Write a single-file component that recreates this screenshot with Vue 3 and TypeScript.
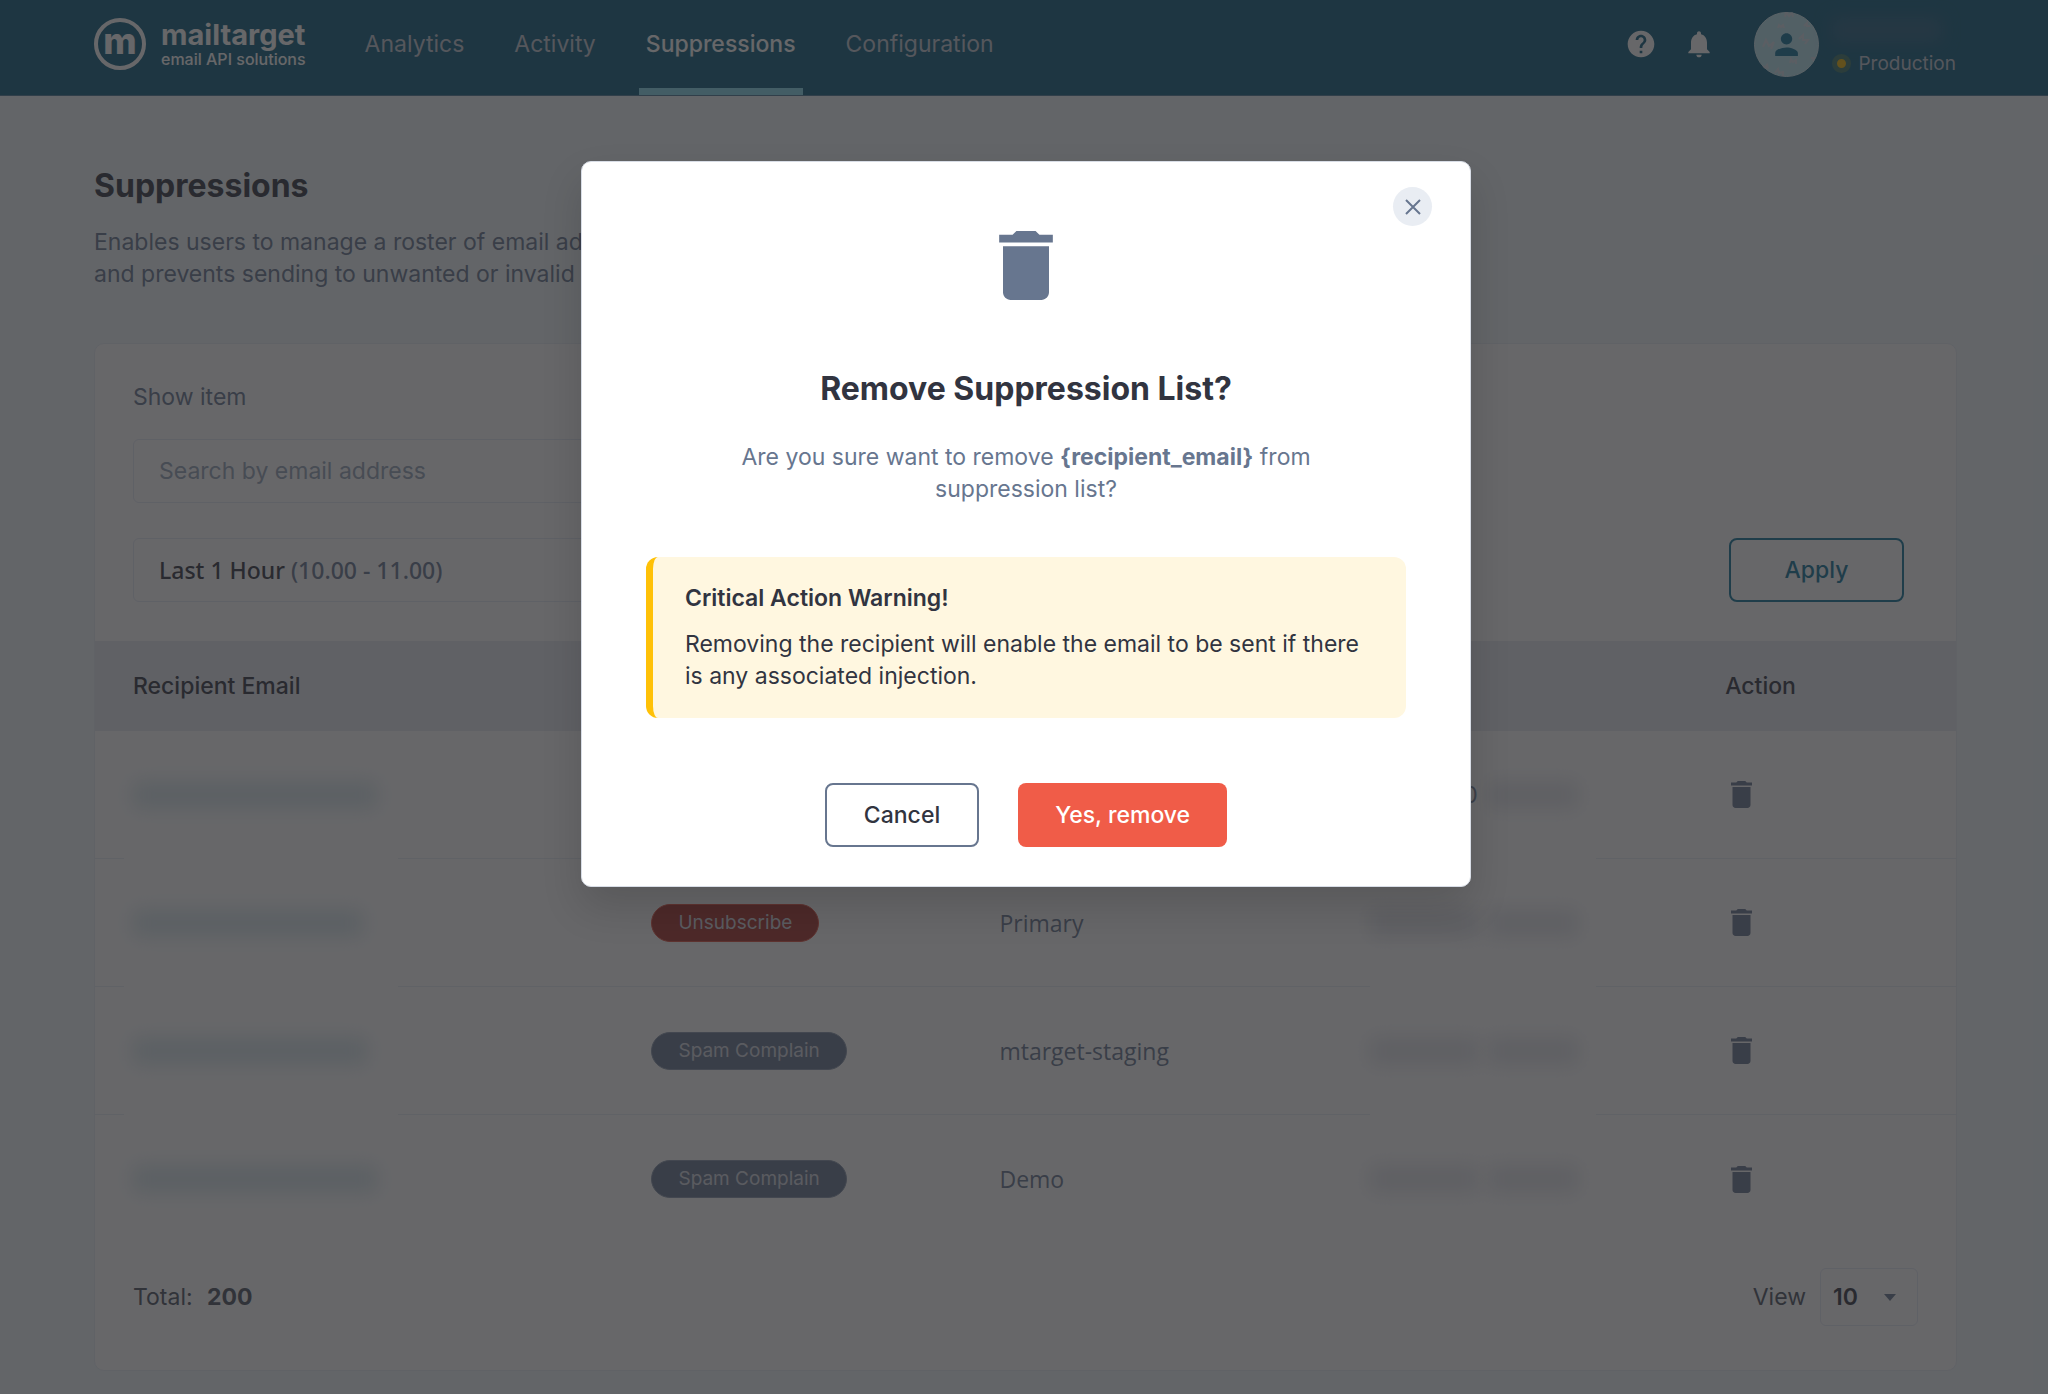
<script setup lang="ts">
import { ref } from 'vue'

interface NavItem {
  label: string
  active: boolean
}
interface Row {
  emailWidth: number
  status: string
  kind: 'danger' | 'muted'
  account: string
  timePrefix: string
}

const nav: NavItem[] = [
  { label: 'Analytics', active: false },
  { label: 'Activity', active: false },
  { label: 'Suppressions', active: true },
  { label: 'Configuration', active: false },
]

const rows: Row[] = [
  { emailWidth: 244, status: 'Spam Complain', kind: 'muted', account: 'Primary', timePrefix: '10:20:00' },
  { emailWidth: 230, status: 'Unsubscribe', kind: 'danger', account: 'Primary', timePrefix: '' },
  { emailWidth: 234, status: 'Spam Complain', kind: 'muted', account: 'mtarget-staging', timePrefix: '' },
  { emailWidth: 244, status: 'Spam Complain', kind: 'muted', account: 'Demo', timePrefix: '' },
]

const search = ref('')
const pageSize = ref('10')
const trash = 'M6 19c0 1.1.9 2 2 2h8c1.1 0 2-.9 2-2V7H6v12zM19 4h-3.5l-1-1h-5l-1 1H5v2h14V4z'
</script>

<template>
  <div class="app">
    <header class="topbar">
      <a class="brand" href="#">
        <span class="brand-mark">m</span>
        <span class="brand-text">
          <span class="brand-name">mailtarget</span>
          <span class="brand-sub">email API solutions</span>
        </span>
      </a>
      <nav class="nav">
        <a v-for="item in nav" :key="item.label" href="#" :class="['nav-link', { active: item.active }]">{{ item.label }}</a>
      </nav>
      <div class="tools">
        <button class="icon-btn" type="button" aria-label="Help">
          <svg viewBox="0 0 24 24" width="32" height="32"><path d="M12 2C6.48 2 2 6.48 2 12s4.480 10 10 10 10-4.480 10-10S17.520 2 12 2zm1 17h-2v-2h2v2zm2.070-7.750l-.9.920C13.450 12.900 13 13.500 13 15h-2v-.5c0-1.100.450-2.100 1.170-2.830l1.240-1.260c.370-.360.590-.860.590-1.410 0-1.100-.9-2-2-2s-2 .9-2 2H8c0-2.210 1.790-4 4-4s4 1.790 4 4c0 .880-.360 1.680-.930 2.250z" /></svg>
        </button>
        <button class="icon-btn" type="button" aria-label="Notifications">
          <svg viewBox="0 0 24 24" width="32" height="32"><path d="M12 22c1.100 0 2-.9 2-2h-4c0 1.100.890 2 2 2zm6-6v-5c0-3.070-1.640-5.640-4.500-6.320V4c0-.830-.670-1.500-1.500-1.500s-1.500.670-1.500 1.500v.680C7.630 5.360 6 7.920 6 11v5l-2 2v1h16v-1l-2-2z" /></svg>
        </button>
        <div class="account">
          <svg class="avatar" viewBox="0 0 65 65" width="65" height="65">
            <clipPath id="avatar-clip"><circle cx="32.500" cy="32.500" r="32.500" /></clipPath>
            <circle class="avatar-bg" cx="32.500" cy="32.500" r="32" />
            <g class="avatar-pattern" clip-path="url(#avatar-clip)">
              <path d="M9 35l3-7 3 6 5-4-3 7" /><path d="M31 5l1-5 3 4 3-4 1 5" />
              <path d="M45 27l4-4 0 5 5 0-3 4" /><path d="M24 16l1-3 2 2 2-2 1 3" />
              <path d="M50 14l3-3 0 3 3 0" /><path d="M36 51l1-4 2 3 3-2 0 4" />
              <path d="M21 61l3-4 1 4 4-1 0 4" /><path d="M9 54l2 2 2-3 1 4" /><path d="M57 46l3 0-1 3" />
            </g>
            <path class="avatar-person" transform="translate(15.500 15.500) scale(1.420)" d="M12 12c2.210 0 4-1.790 4-4s-1.790-4-4-4-4 1.790-4 4 1.790 4 4 4zm0 2c-2.670 0-8 1.340-8 4v2h16v-2c0-2.660-5.330-4-8-4z" />
          </svg>
          <div class="account-text">
            <span class="account-name"></span>
            <span class="env"><span class="env-dot"></span>Production</span>
          </div>
        </div>
      </div>
    </header>

    <main class="page">
      <h1>Suppressions</h1>
      <p class="lead">
        Enables users to manage a roster of email addresses,<br />
        and prevents sending to unwanted or invalid addresses.
      </p>

      <section class="card">
        <form class="filters" @submit.prevent>
          <label class="filter-label" for="search">Show item</label>
          <input id="search" v-model="search" class="field" type="text" placeholder="Search by email address" />
          <div class="filter-row">
            <button class="field range" type="button">Last 1 Hour <span>(10.00 - 11.00)</span></button>
            <button class="btn btn-apply" type="submit">Apply</button>
          </div>
        </form>

        <table>
          <colgroup>
            <col class="c-email" /><col class="c-status" /><col class="c-account" /><col class="c-time" /><col />
          </colgroup>
          <thead>
            <tr>
              <th>Recipient Email</th>
              <th>Status</th>
              <th>Sub Account</th>
              <th>Time</th>
              <th>Action</th>
            </tr>
          </thead>
          <tbody>
            <tr v-for="(row, i) in rows" :key="i">
              <td class="email"><span class="smudge" :style="{ width: row.emailWidth + 'px' }"></span></td>
              <td><span :class="['badge', row.kind]">{{ row.status }}</span></td>
              <td class="account-cell">{{ row.account }}</td>
              <td class="time">
                <div class="time-inner">
                  <span v-if="row.timePrefix" class="time-prefix">{{ row.timePrefix }}</span>
                  <span v-else class="smudge wide"></span>
                  <span class="smudge short"></span>
                </div>
              </td>
              <td class="action">
                <button class="icon-btn" type="button" aria-label="Remove">
                  <svg viewBox="5 3 14 18" width="21" height="27"><path :d="trash" /></svg>
                </button>
              </td>
            </tr>
          </tbody>
        </table>

        <footer class="card-foot">
          <span class="total">Total: <strong>200</strong></span>
          <div class="view">
            <label for="page-size">View</label>
            <div class="select">
              <select id="page-size" v-model="pageSize">
                <option>10</option>
                <option>25</option>
                <option>50</option>
              </select>
              <span class="caret"></span>
            </div>
          </div>
        </footer>
      </section>
    </main>

    <div class="overlay">
      <div class="modal" role="dialog" aria-modal="true" aria-labelledby="modal-title">
        <button class="close" type="button" aria-label="Close">
          <svg viewBox="0 0 18 18" width="18" height="18"><path d="M2 2l14 14M16 2L2 16" /></svg>
        </button>
        <svg class="modal-icon" viewBox="5 3 14 18" width="54" height="69"><path :d="trash" /></svg>
        <h2 id="modal-title">Remove Suppression List?</h2>
        <p class="question">Are you sure want to remove <strong>{recipient_email}</strong> from suppression list?</p>
        <div class="alert">
          <strong>Critical Action Warning!</strong>
          <p>Removing the recipient will enable the email to be sent if there is any associated injection.</p>
        </div>
        <div class="actions">
          <button class="btn btn-cancel" type="button">Cancel</button>
          <button class="btn btn-danger" type="button">Yes, remove</button>
        </div>
      </div>
    </div>
  </div>
</template>

<style>
body {
  background: #f0f8fb;
}
</style>

<style scoped>
* {
  box-sizing: border-box;
}
.app {
  position: relative;
  min-height: 100vh;
  background: #f0f8fb;
  color: #313440;
  font-family: Inter, "Noto Sans", sans-serif;
  font-size: 23px;
  line-height: 32px;
}
a {
  color: inherit;
  text-decoration: none;
}
button,
input,
select {
  font: inherit;
  color: inherit;
}
svg {
  display: block;
}

.topbar {
  display: flex;
  align-items: stretch;
  height: 96px;
  padding: 0 92px 0 94px;
  background: #0c5c7c;
  border-bottom: 1px solid #4a7898;
  color: #ffffff;
}
.brand {
  display: flex;
  align-items: center;
  gap: 15px;
  height: 88px;
  margin-right: 52px;
}
.brand-mark {
  display: flex;
  justify-content: center;
  width: 52px;
  height: 52px;
  border: 4px solid #ffffff;
  border-radius: 50%;
  font-size: 36px;
  font-weight: 800;
  line-height: 38px;
}
.brand-text {
  display: flex;
  flex-direction: column;
}
.brand-name {
  font-size: 29px;
  font-weight: 700;
  line-height: 30px;
}
.brand-sub {
  font-size: 16px;
  font-weight: 500;
  line-height: 18px;
}
.nav {
  display: flex;
  gap: 36px;
}
.nav-link {
  padding: 28px 7px 0;
  color: #c2c8d4;
}
.nav-link.active {
  color: #ffffff;
  font-weight: 500;
  border-bottom: 7px solid #88dcf0;
}
.tools {
  display: flex;
  align-items: center;
  height: 88px;
  margin-left: auto;
}
.icon-btn {
  display: block;
  padding: 0;
  border: 0;
  background: none;
}
.icon-btn svg {
  fill: currentColor;
}
.tools .icon-btn {
  margin-right: 26px;
}
.account {
  display: flex;
  gap: 13px;
  margin-left: 13px;
}
.avatar-bg {
  fill: #b8e6f2;
  stroke: #d4eef4;
}
.avatar-pattern {
  fill: none;
  stroke: #d8e2ea;
  stroke-width: 2;
}
.avatar-person {
  fill: #0f7398;
}
.account-text {
  display: flex;
  flex-direction: column;
  justify-content: space-between;
}
.account-name {
  width: 110px;
  height: 24px;
  margin-top: 6px;
  background: #266082;
  filter: blur(8px);
}
.env {
  display: flex;
  align-items: center;
  gap: 7px;
  color: #c2c8d4;
  font-size: 19px;
  line-height: 26px;
}
.env-dot {
  width: 19px;
  height: 19px;
  border: 5px solid #3a7464;
  border-radius: 50%;
  background: #f0b400;
}

.page {
  padding: 64px 91px 25px 94px;
}
h1 {
  margin: 0;
  font-size: 32px;
  font-weight: 700;
  line-height: 52px;
}
.lead {
  margin: 14px 0 53px;
  color: #67768f;
}
.card {
  border: 1px solid #e8edf6;
  border-radius: 10px;
  background: #ffffff;
  overflow: hidden;
}
.filters {
  display: flex;
  flex-direction: column;
  padding: 37px 52px 39px 38px;
}
.filter-label {
  color: #67768f;
}
.field {
  width: 720px;
  height: 64px;
  padding: 0 25px;
  border: 1px solid #e4e9f4;
  border-radius: 6px;
  background: none;
  text-align: left;
}
#search {
  margin: 26px 0 35px;
}
#search::placeholder {
  color: #94a3b8;
  opacity: 1;
}
.range {
  font-family: "Noto Sans", sans-serif;
  font-weight: 500;
}
.range span {
  color: #67768f;
}
.filter-row {
  display: flex;
  justify-content: space-between;
}
.btn {
  height: 64px;
  border-radius: 8px;
  font-weight: 500;
}
.btn-apply {
  width: 175px;
  border: 2px solid #0f7398;
  background: none;
  color: #0f7398;
}

table {
  width: 100%;
  border-collapse: separate;
  border-spacing: 0;
  table-layout: fixed;
}
.c-email {
  width: 29.9%;
}
.c-status {
  width: 18.7%;
}
.c-account {
  width: 19.9%;
}
.c-time {
  width: 19.1%;
}
th {
  height: 90px;
  padding: 0;
  background: #e6eaf2;
  font-weight: 500;
  text-align: left;
}
td {
  height: 128px;
  padding: 0;
  border-bottom: 1px solid #e8edf6;
}
tbody tr:last-child td {
  border-bottom: 0;
}
th:first-child,
td:first-child {
  padding-left: 38px;
}
.smudge {
  display: block;
  height: 26px;
  background: #d6e6ec;
  filter: blur(10px);
}
.email,
.time {
  position: relative;
}
.email::after,
.time::after {
  content: "";
  position: absolute;
  bottom: -1px;
  left: 29px;
  width: 274px;
  height: 1px;
  background: #ffffff;
}
.time::after {
  left: 0;
  width: 226px;
}
.badge {
  display: inline-block;
  padding: 0 26px;
  border: 1px solid #8594aa;
  border-radius: 20px;
  background: #67768f;
  color: #d4d8e0;
  font-size: 19px;
  line-height: 36px;
}
.badge.danger {
  border-color: #e05040;
  background: #a83028;
}
.account-cell {
  color: #67768f;
  font-family: "Open Sans", sans-serif;
}
.time-inner {
  display: flex;
  align-items: center;
  gap: 10px;
}
.time-prefix {
  width: 108px;
  color: #67768f;
  text-align: right;
}
.time .smudge {
  background: #e2e4ea;
}
.wide {
  width: 108px;
}
.short {
  width: 90px;
}
.action {
  color: #67768f;
}
.action .icon-btn {
  margin-left: 6px;
}

.card-foot {
  display: flex;
  align-items: center;
  justify-content: space-between;
  height: 127px;
  padding: 0 38px 19px;
}
.total strong {
  margin-left: 8px;
}
.total,
.view {
  color: #4a5160;
}
.view {
  display: flex;
  align-items: center;
  gap: 14px;
}
.select {
  position: relative;
}
.select select {
  width: 98px;
  height: 58px;
  padding: 0 12px;
  border: 1px solid #e4e9f4;
  border-radius: 6px;
  background: none;
  color: #313440;
  font-weight: 600;
  appearance: none;
}
.caret {
  position: absolute;
  top: 26px;
  right: 22px;
  border: 6px solid transparent;
  border-top: 7px solid #67768f;
  border-bottom: 0;
  pointer-events: none;
}

.overlay {
  position: absolute;
  inset: 0;
  display: flex;
  align-items: flex-start;
  justify-content: center;
  padding: 161px 0 0 4px;
  background: rgba(38, 39, 41, 0.7);
}
.modal {
  position: relative;
  display: flex;
  flex-direction: column;
  align-items: center;
  width: 890px;
  padding: 69px 64px 39px;
  border: 1px solid #d8dde6;
  border-radius: 10px;
  background: #ffffff;
  box-shadow: 0 20px 40px rgba(0, 0, 0, 0.14);
}
.close {
  position: absolute;
  top: 25px;
  right: 38px;
  display: grid;
  place-items: center;
  width: 39px;
  height: 39px;
  padding: 0;
  border: 0;
  border-radius: 50%;
  background: #e9edf3;
}
.close path {
  fill: none;
  stroke: #67768f;
  stroke-width: 2;
}
.modal-icon {
  fill: #67768f;
}
h2 {
  margin: 65px 0 0;
  font-size: 32px;
  font-weight: 700;
  line-height: 48px;
}
.question {
  width: 600px;
  margin: 28px 0 52px;
  color: #67768f;
  text-align: center;
}
.alert {
  width: 100%;
  padding: 25px 32px 26px;
  border-left: 7px solid #ffc107;
  border-radius: 12px;
  background: #fff7e0;
}
.alert strong {
  display: block;
  font-weight: 600;
}
.alert p {
  margin: 14px 0 0;
}
.actions {
  display: flex;
  gap: 39px;
  margin-top: 65px;
}
.btn-cancel {
  padding: 0 37px;
  border: 2px solid #67768f;
  background: #ffffff;
}
.btn-danger {
  padding: 0 37px;
  border: 0;
  background: #f05c48;
  color: #ffffff;
}
</style>
